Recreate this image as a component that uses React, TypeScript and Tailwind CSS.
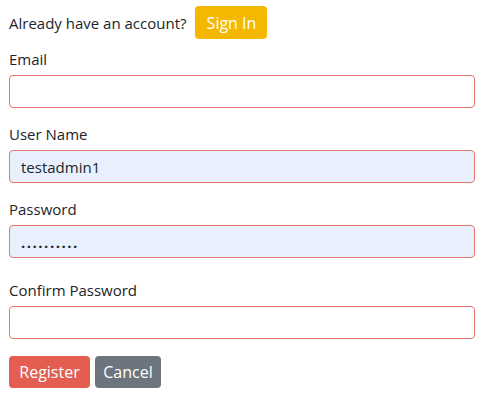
const inputBase =
  "block w-[466px] h-[33px] rounded-[4px] border border-[#e8776d] px-[11px] text-[15px] text-[#212529] outline-none";

const App = () => {
  return (
    <div className="min-h-[400px] bg-white pl-[9px] pt-[6px] font-['Open_Sans',sans-serif] text-[15px] text-[#212529]">
      <div className="flex h-[33px] items-center">
        <span className="leading-[22px]">Already have an account?</span>
        <button className="ml-[9px] h-[33px] w-[72px] rounded-[4px] bg-[#f4b800] text-[16px] text-white">
          Sign In
        </button>
      </div>

      <form className="mt-[9px]" onSubmit={(e) => e.preventDefault()}>
        <div>
          <label className="block h-[22px] leading-[22px] mb-[5px]">Email</label>
          <input className={inputBase + " bg-white"} type="email" />
        </div>

        <div className="mt-[15px]">
          <label className="block h-[22px] leading-[22px] mb-[5px]">User Name</label>
          <input
            className={inputBase + " bg-[#e8f0fe]"}
            type="text"
            defaultValue="testadmin1"
            readOnly
          />
        </div>

        <div className="mt-[15px]">
          <label className="block h-[22px] leading-[22px] mb-[5px]">Password</label>
          <input
            className={inputBase + " bg-[#e8f0fe] font-bold text-[10px] tracking-[1.5px]"}
            type="text"
            defaultValue=".........."
            readOnly
          />
        </div>

        <div className="mt-[21px]">
          <label className="block h-[22px] leading-[22px] mb-[5px]">Confirm Password</label>
          <input className={inputBase + " bg-white"} type="password" />
        </div>

        <div className="mt-[17px] flex gap-[5px]">
          <button className="h-[32px] w-[81px] rounded-[4px] bg-[#e35d50] text-[16px] text-white">
            Register
          </button>
          <button className="h-[32px] w-[66px] rounded-[4px] bg-[#6c757d] text-[16px] text-white">
            Cancel
          </button>
        </div>
      </form>
    </div>
  );
};

export default App;
